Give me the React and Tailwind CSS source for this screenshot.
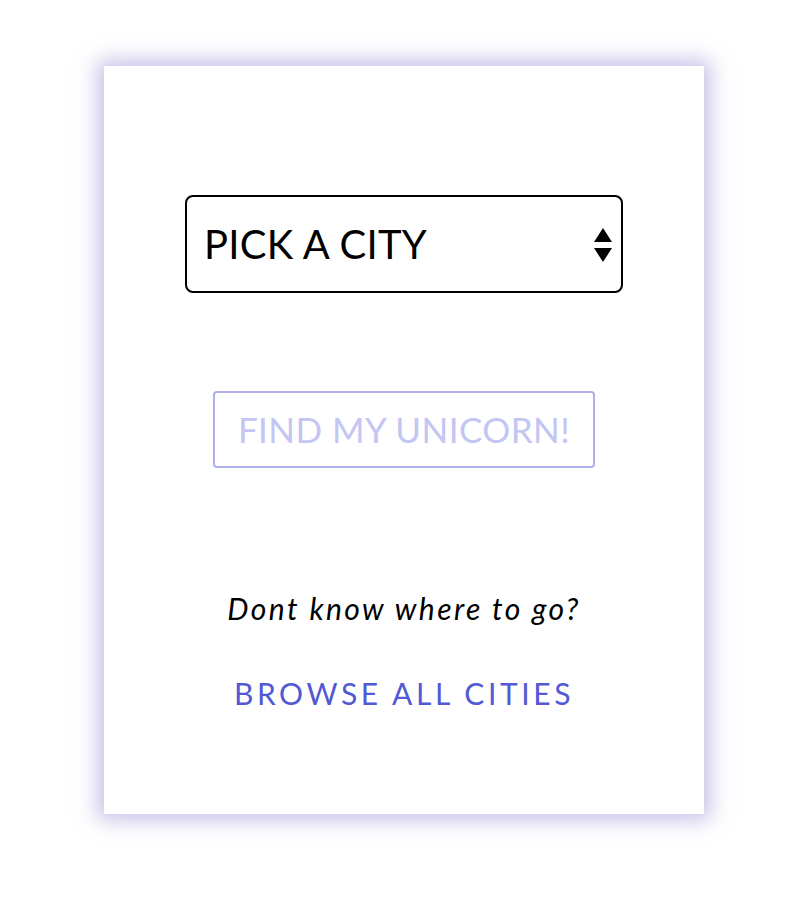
export default function App() {
  return (
    <div className="min-h-screen bg-white pt-[66px]" style={{ fontFamily: "Lato, 'Open Sans', sans-serif" }}>
      <div className="ml-[104px] flex h-[748px] w-[600px] flex-col items-center bg-white shadow-[0_0_20px_6px_rgba(160,150,215,0.6)]">
        {/* City select */}
        <div className="relative mt-[129px] flex h-[98px] w-[438px] items-center rounded-[8px] border-2 border-black pl-[17px]">
          <span className="text-[40px] leading-none tracking-[0.3px] text-black">PICK A CITY</span>
          <svg className="absolute right-[8px] top-[31px]" width="20" height="36" viewBox="0 0 20 36">
            <polygon points="10,0 19,14 1,14" fill="#000" />
            <polygon points="1,20 19,20 10,34" fill="#000" />
          </svg>
        </div>

        {/* Submit */}
        <button className="mt-[98px] flex h-[77px] w-[382px] items-center justify-center rounded-[4px] border-2 border-[#aeb0ec] text-[35px] leading-none tracking-[0.45px] text-[#c3c5f2]">
          FIND MY UNICORN!
        </button>

        <p className="mt-[125px] text-[30px] italic leading-none tracking-[2.4px] text-black">Dont know where to go?</p>

        <a className="mt-[55px] text-[30px] leading-none tracking-[3.6px] text-[#5159d4]">BROWSE ALL CITIES</a>
      </div>
    </div>
  );
}
